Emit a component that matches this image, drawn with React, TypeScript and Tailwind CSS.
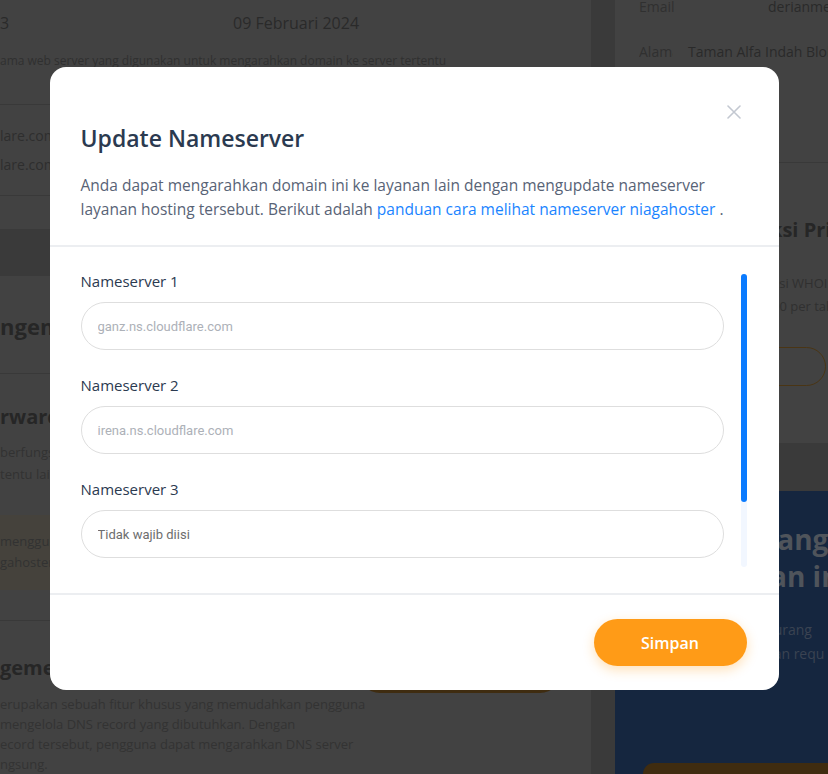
import React from 'react';

const nameservers = [
  { label: 'Nameserver 1', placeholder: 'ganz.ns.cloudflare.com', dim: false },
  { label: 'Nameserver 2', placeholder: 'irena.ns.cloudflare.com', dim: false },
  { label: 'Nameserver 3', placeholder: 'Tidak wajib diisi', dim: true },
];

function CloseIcon() {
  return (
    <svg width="14" height="14" viewBox="0 0 14 14" fill="none">
      <path d="M1 1L13 13M13 1L1 13" stroke="#c3c8d1" strokeWidth="1.6" strokeLinecap="round" />
    </svg>
  );
}

// the page behind the dialog, already dimmed by the backdrop
function BackdropPage() {
  return (
    <div className="flex h-full w-full bg-[#424242] font-['Open_Sans'] text-[#2a2a2a]">
      {/* left card */}
      <div className="flex w-[591px] shrink-0 flex-col">
        <div className="flex h-[48px] items-center text-[16px]">
          <span className="w-[233px]">3</span>
          <span>09 Februari 2024</span>
        </div>
        <p className="mt-[4px] text-[12px] leading-5 text-[#303030]">
          ama web server yang digunakan untuk mengarahkan domain ke server tertentu
        </p>
        <div className="mt-[33px] border-t border-[#393939]" />
        <div className="flex flex-col gap-[8px] pt-[20px] text-[14px] leading-[21px] text-[#2e2e2e]">
          <span>lare.com</span>
          <span>lare.com</span>
        </div>
        <div className="mt-[20px] border-t border-[#393939]" />
        <div className="mt-[33px] h-[48px] bg-[#3a3a3a]" />
        <h3 className="mt-[36px] text-[22px] font-bold leading-7 text-[#262626]">ngement Nameserver</h3>
        <div className="mt-[33px] border-t border-[#393939]" />
        <h3 className="mt-[29px] text-[20px] font-bold leading-7 text-[#262626]">rwarding</h3>
        <p className="mt-[10px] text-[13px] leading-[22px] text-[#323232]">
          berfungsi untuk mengalihkan domain ke alamat
          <br />
          tentu lain
        </p>
        <div className="mt-[30px] flex h-[77px] flex-col justify-center bg-[#45423c] text-[13px] leading-[21px] text-[#323232]">
          <span>menggunakan</span>
          <span>gahoster</span>
        </div>
        <div className="mt-[30px] border-t border-[#393939]" />
        <div className="flex items-start justify-between pr-[29px]">
          <h3 className="mt-[33px] text-[20px] font-bold leading-7 text-[#262626]">gement</h3>
          <div className="mt-[24px] h-[48px] w-[204px] rounded-b-[22px] bg-[#3f2c10]" />
        </div>
        <p className="mt-[1px] text-[13px] leading-[20px] text-[#333333]">
          erupakan sebuah fitur khusus yang memudahkan pengguna
          <br />
          mengelola DNS record yang dibutuhkan. Dengan
          <br />
          ecord tersebut, pengguna dapat mengarahkan DNS server
          <br />
          ngsung.
        </p>
      </div>

      {/* gap between cards */}
      <div className="w-[24px] shrink-0 bg-[#3a3a3a]" />

      {/* right card */}
      <div className="flex min-w-0 flex-1 flex-col overflow-hidden">
        <div className="flex flex-col gap-[24px] pl-[24px] text-[14px] leading-[21px] whitespace-nowrap">
          <div className="-mt-[4px] flex">
            <span className="w-[129px] shrink-0 overflow-hidden text-[#303030]">Email</span>
            <span>derianmeza@gmail.com</span>
          </div>
          <div className="flex">
            <span className="mr-[15px] w-[34px] shrink-0 overflow-hidden text-[#303030]">Alamat</span>
            <span>Taman Alfa Indah Blok</span>
          </div>
        </div>
        <div className="mt-[100px] border-t border-[#393939]" />
        <h3 className="mt-[53px] pl-[155px] text-[20px] font-bold leading-7 whitespace-nowrap text-[#262626]">
          ksi Privasi
        </h3>
        <p className="mt-[28px] pl-[157px] text-[13px] leading-[23px] whitespace-nowrap text-[#303030]">
          asi WHOIS
          <br />
          00 per tahun
        </p>
        <div className="mt-[29px] flex justify-end pr-[2px]">
          <div className="flex h-[39px] w-[120px] items-center rounded-[20px] border border-[#4a3514] pl-[35px] text-[15px] font-semibold text-[#4f3a17]">
            ang
          </div>
        </div>
        <div className="mt-[57px] h-[48px] bg-[#3a3a3a]" />
        <div className="flex flex-1 flex-col bg-[#15263f] pl-[155px]">
          <p className="mt-[30px] text-[28px] font-bold leading-[37px] whitespace-nowrap text-[#4f545b]">
            &nbsp;ang
            <br />
            an in
          </p>
          <p className="mt-[23px] text-[14px] leading-[24px] whitespace-nowrap text-[#3a4352]">
            &nbsp;urang
            <br />
            &nbsp;an requ
          </p>
        </div>
      </div>
      <div className="absolute bottom-0 right-0 h-[11px] w-[185px] rounded-tl-[22px] bg-[#3f2c10]" />
    </div>
  );
}

export default function App() {
  return (
    <div className="relative h-[774px] w-[828px] overflow-hidden">
      <BackdropPage />

      <div className="absolute inset-0 flex justify-center">
        <div className="mt-[67px] flex h-[623px] w-[729px] flex-col rounded-2xl bg-white font-['Open_Sans']">
          {/* header */}
          <div className="relative px-[31px] pt-[56px] pb-[24px]">
            <button className="absolute top-[38px] right-[38px]">
              <CloseIcon />
            </button>
            <h2 className="text-[23px] font-semibold leading-[30px] text-[#2b3a50]">Update Nameserver</h2>
            <p className="mt-[20px] max-w-[650px] text-[15.5px] leading-[24px] text-[#586376]">
              Anda dapat mengarahkan domain ini ke layanan lain dengan mengupdate nameserver
              <br />
              layanan hosting tersebut. Berikut adalah{' '}
              <a className="text-[#1a84ff]">panduan cara melihat nameserver niagahoster</a> .
            </p>
          </div>

          <div className="border-t-2 border-[#eceef1]" />

          {/* body */}
          <div className="flex min-h-0 flex-1 pl-[31px] pr-[32px]">
            <div className="min-h-0 flex-1 overflow-hidden pt-[24px]">
              {nameservers.map((ns) => (
                <div key={ns.label} className="mb-[25px]">
                  <label className="block text-[15px] font-medium leading-5 text-[#2b3a50]">{ns.label}</label>
                  <input
                    type="text"
                    placeholder={ns.placeholder}
                    className={`mt-[11px] h-12 w-full rounded-full border border-[#dedede] px-4 font-['Roboto'] text-[13px] outline-none ${
                      ns.dim ? 'placeholder:text-[#6d6d6d]' : 'placeholder:text-[#adb1b8]'
                    }`}
                  />
                </div>
              ))}
            </div>
            <div className="ml-[17px] flex w-1.5 flex-col pt-[27px] pb-[26px]">
              <div className="flex flex-1 flex-col rounded-full bg-[#f2f7ff]">
                <div className="h-[228px] rounded-full bg-[#0a7bff]" />
              </div>
            </div>
          </div>

          <div className="border-t-2 border-[#eceef1]" />

          {/* footer */}
          <div className="flex justify-end px-[32px] pt-[24px] pb-[24px]">
            <button className="h-[47px] w-[153px] rounded-full bg-[#ff9b17] text-[16px] font-semibold text-white shadow-[0_4px_12px_rgba(255,155,23,0.3)]">
              Simpan
            </button>
          </div>
        </div>
      </div>
    </div>
  );
}
